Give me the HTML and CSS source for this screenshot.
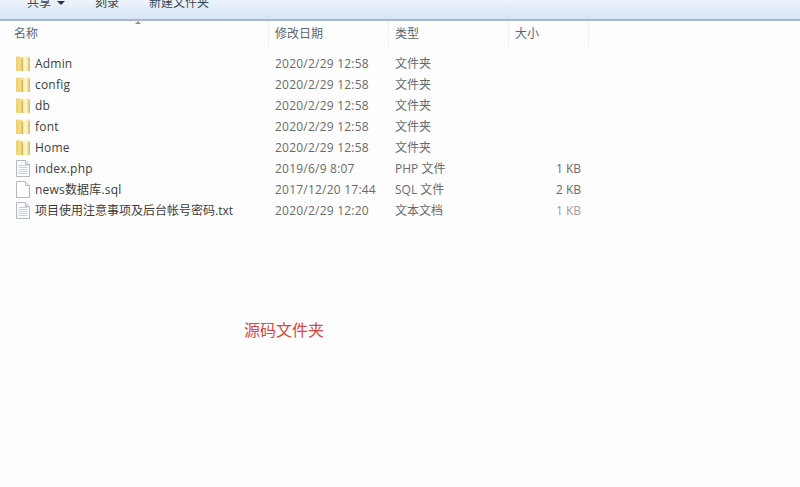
FILE: index.html
```html
<!DOCTYPE html>
<html lang="zh-CN">
<head>
<meta charset="utf-8">
<title>源码文件夹</title>
<link rel="stylesheet" href="styles.css">
</head>
<body>
<svg class="defs" width="0" height="0" aria-hidden="true">
  <defs>
    <linearGradient id="fg" x1="0" y1="0" x2="1" y2="0">
      <stop offset="0" stop-color="#f6e6a4"/>
      <stop offset="0.55" stop-color="#fdf6d0"/>
      <stop offset="1" stop-color="#ecd07c"/>
    </linearGradient>
    <linearGradient id="fl" x1="0" y1="0" x2="1" y2="0">
      <stop offset="0" stop-color="#eccf72"/>
      <stop offset="1" stop-color="#f6e090"/>
    </linearGradient>
    <symbol id="folder" viewBox="0 0 14 17">
      <path d="M0 1.5h5l1 1V16H1a1 1 0 0 1-1-1z" fill="url(#fl)"/>
      <path d="M6 1.5h6.5l.8 1V16H6z" fill="url(#fg)"/>
      <path d="M5.5 2.5l1.5 2V16H5.5z" fill="#d8b552"/>
      <path d="M12.6 3H14v13h-1.4z" fill="#e0c067"/>
    </symbol>
    <symbol id="doc" viewBox="0 0 14 17">
      <path d="M.5.5h9l4 4v12H.5z" fill="#fbfcfd" stroke="#b4bac1"/>
      <path d="M9.5.5v4h4" fill="#e8ecf0" stroke="#b4bac1"/>
      <path d="M2.5 5.5h9M2.5 7.5h9M2.5 9.5h9M2.5 11.5h9M2.5 13.5h9" fill="none" stroke="#c8d2de"/>
    </symbol>
    <symbol id="blank" viewBox="0 0 14 17">
      <path d="M.5.5h9l4 4v12H.5z" fill="#fff" stroke="#b4bac1"/>
      <path d="M9.5.5v4h4" fill="#f0f2f4" stroke="#b4bac1"/>
    </symbol>
  </defs>
</svg>

<div class="toolbar">
  <span class="tool tool-share">共享<i class="caret"></i></span>
  <span class="tool tool-burn">刻录</span>
  <span class="tool">新建文件夹</span>
</div>

<div class="header">
  <div class="head-cell head-name">名称<i class="sort"></i></div>
  <div class="head-cell">修改日期</div>
  <div class="head-cell">类型</div>
  <div class="head-cell">大小</div>
</div>

<div class="rows">
  <div class="row"><div class="name"><svg class="ico"><use href="#folder"/></svg>Admin</div><div class="date">2020/2/29 12:58</div><div class="type">文件夹</div><div class="size"></div></div>
  <div class="row"><div class="name"><svg class="ico"><use href="#folder"/></svg>config</div><div class="date">2020/2/29 12:58</div><div class="type">文件夹</div><div class="size"></div></div>
  <div class="row"><div class="name"><svg class="ico"><use href="#folder"/></svg>db</div><div class="date">2020/2/29 12:58</div><div class="type">文件夹</div><div class="size"></div></div>
  <div class="row"><div class="name"><svg class="ico"><use href="#folder"/></svg>font</div><div class="date">2020/2/29 12:58</div><div class="type">文件夹</div><div class="size"></div></div>
  <div class="row"><div class="name"><svg class="ico"><use href="#folder"/></svg>Home</div><div class="date">2020/2/29 12:58</div><div class="type">文件夹</div><div class="size"></div></div>
  <div class="row"><div class="name"><svg class="ico"><use href="#doc"/></svg>index.php</div><div class="date">2019/6/9 8:07</div><div class="type">PHP 文件</div><div class="size">1 KB</div></div>
  <div class="row"><div class="name"><svg class="ico"><use href="#blank"/></svg>news数据库.sql</div><div class="date">2017/12/20 17:44</div><div class="type">SQL 文件</div><div class="size">2 KB</div></div>
  <div class="row"><div class="name name-long"><svg class="ico"><use href="#doc"/></svg>项目使用注意事项及后台帐号密码.txt</div><div class="date">2020/2/29 12:20</div><div class="type">文本文档</div><div class="size size-faint">1 KB</div></div>
</div>

<div class="caption">源码文件夹</div>
</body>
</html>
```
FILE: styles.css
```css
html, body {
  margin: 0;
  padding: 0;
  height: 100%;
  overflow: hidden;
}
body {
  background: #fefefe;
  color: #4c4c4c;
  font-family: "Open Sans", "Noto Sans CJK SC", sans-serif;
  font-size: 12px;
}
.defs {
  display: block;
  height: 0;
}
.toolbar {
  display: flex;
  align-items: flex-start;
  height: 19px;
  padding-left: 27px;
  overflow: hidden;
  background: linear-gradient(#edf4fb, #d7e5f4);
  border-bottom: 2px solid #a9b8c9;
  color: #3a4652;
}
.tool {
  display: flex;
  align-items: center;
  margin-top: -5px;
  line-height: 16px;
  font-size: 12px;
  white-space: nowrap;
}
.tool-share { width: 68px; }
.tool-burn { width: 54px; }
.caret {
  width: 0;
  height: 0;
  margin-left: 6px;
  border-top: 4px solid #26323e;
  border-left: 4px solid transparent;
  border-right: 4px solid transparent;
}
.header {
  display: grid;
  grid-template-columns: 269px 120px 120px 80px;
  height: 24px;
  width: 589px;
}
.head-cell {
  position: relative;
  padding-left: 6px;
  line-height: 26px;
  border-right: 1px solid #eef0f3;
  color: #5c6670;
}
.head-name { padding-left: 14px; }
.sort {
  position: absolute;
  left: 135px;
  top: 0;
  width: 0;
  height: 0;
  border-bottom: 3px solid #8a8f96;
  border-left: 3px solid transparent;
  border-right: 3px solid transparent;
}
.rows {
  padding-top: 8px;
}
.row {
  display: grid;
  grid-template-columns: 268px 120px 120px 73px;
  height: 21px;
  align-items: center;
  line-height: 21px;
}
.name {
  display: flex;
  align-items: center;
  padding-left: 16px;
  color: #3c3c3c;
  letter-spacing: 0.2px;
  white-space: nowrap;
}
.name-long { letter-spacing: 0; }
.ico {
  width: 14px;
  height: 17px;
  margin-right: 5px;
  flex: none;
}
.date, .type {
  padding-left: 7px;
  color: #6a6a6a;
  white-space: nowrap;
}
.date { letter-spacing: 0.22px; }
.size {
  text-align: right;
  color: #6a6a6a;
}
.size-faint { color: #a0a0a0; }
.caption {
  margin: 98px 0 0 244px;
  font-size: 16px;
  line-height: 22px;
  color: #d6483f;
}
```
